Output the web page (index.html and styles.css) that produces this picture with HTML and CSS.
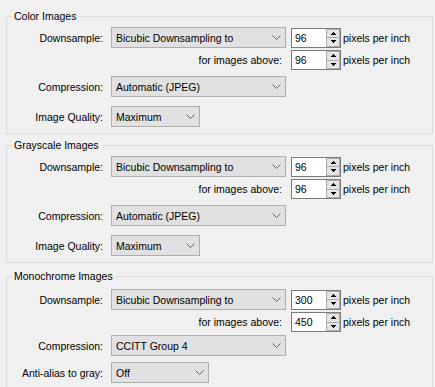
FILE: index.html
```html
<!DOCTYPE html>
<html lang="en">
<head>
    <meta charset="UTF-8">
    <title>Image compression settings</title>
    <link rel="stylesheet" href="styles.css">
</head>
<body>
    <div class="panel">
        <fieldset class="group g-color">
            <legend>Color Images</legend>
            <div class="row r1">
                <span class="lbl">Downsample:</span>
                <div class="combo wide"><span>Bicubic Downsampling to</span><svg class="chev" width="9" height="5"><polyline points="0.5,0.5 4.5,4.5 8.5,0.5"/></svg></div>
                <div class="spin"><span class="val">96</span><span class="btns"><span class="up"><svg width="5" height="3"><path d="M2 0h1v1h1v1h1v1H0V2h1V1h1z"/></svg></span><span class="down"><svg width="5" height="3"><path d="M0 0h5v1H4v1H3v1H2V2H1V1H0z"/></svg></span></span></div>
                <span class="unit">pixels per inch</span>
            </div>
            <div class="row r2">
                <span class="lbl long">for images above:</span>
                <div class="spin"><span class="val">96</span><span class="btns"><span class="up"><svg width="5" height="3"><path d="M2 0h1v1h1v1h1v1H0V2h1V1h1z"/></svg></span><span class="down"><svg width="5" height="3"><path d="M0 0h5v1H4v1H3v1H2V2H1V1H0z"/></svg></span></span></div>
                <span class="unit">pixels per inch</span>
            </div>
            <div class="row r3">
                <span class="lbl">Compression:</span>
                <div class="combo wide"><span>Automatic (JPEG)</span><svg class="chev" width="9" height="5"><polyline points="0.5,0.5 4.5,4.5 8.5,0.5"/></svg></div>
            </div>
            <div class="row r4">
                <span class="lbl">Image Quality:</span>
                <div class="combo short"><span>Maximum</span><svg class="chev" width="9" height="5"><polyline points="0.5,0.5 4.5,4.5 8.5,0.5"/></svg></div>
            </div>
        </fieldset>

        <fieldset class="group g-gray">
            <legend>Grayscale Images</legend>
            <div class="row r1">
                <span class="lbl">Downsample:</span>
                <div class="combo wide"><span>Bicubic Downsampling to</span><svg class="chev" width="9" height="5"><polyline points="0.5,0.5 4.5,4.5 8.5,0.5"/></svg></div>
                <div class="spin"><span class="val">96</span><span class="btns"><span class="up"><svg width="5" height="3"><path d="M2 0h1v1h1v1h1v1H0V2h1V1h1z"/></svg></span><span class="down"><svg width="5" height="3"><path d="M0 0h5v1H4v1H3v1H2V2H1V1H0z"/></svg></span></span></div>
                <span class="unit">pixels per inch</span>
            </div>
            <div class="row r2">
                <span class="lbl long">for images above:</span>
                <div class="spin"><span class="val">96</span><span class="btns"><span class="up"><svg width="5" height="3"><path d="M2 0h1v1h1v1h1v1H0V2h1V1h1z"/></svg></span><span class="down"><svg width="5" height="3"><path d="M0 0h5v1H4v1H3v1H2V2H1V1H0z"/></svg></span></span></div>
                <span class="unit">pixels per inch</span>
            </div>
            <div class="row r3">
                <span class="lbl">Compression:</span>
                <div class="combo wide"><span>Automatic (JPEG)</span><svg class="chev" width="9" height="5"><polyline points="0.5,0.5 4.5,4.5 8.5,0.5"/></svg></div>
            </div>
            <div class="row r4">
                <span class="lbl">Image Quality:</span>
                <div class="combo short"><span>Maximum</span><svg class="chev" width="9" height="5"><polyline points="0.5,0.5 4.5,4.5 8.5,0.5"/></svg></div>
            </div>
        </fieldset>

        <fieldset class="group g-mono">
            <legend>Monochrome Images</legend>
            <div class="row r1">
                <span class="lbl">Downsample:</span>
                <div class="combo wide"><span>Bicubic Downsampling to</span><svg class="chev" width="9" height="5"><polyline points="0.5,0.5 4.5,4.5 8.5,0.5"/></svg></div>
                <div class="spin"><span class="val">300</span><span class="btns"><span class="up"><svg width="5" height="3"><path d="M2 0h1v1h1v1h1v1H0V2h1V1h1z"/></svg></span><span class="down"><svg width="5" height="3"><path d="M0 0h5v1H4v1H3v1H2V2H1V1H0z"/></svg></span></span></div>
                <span class="unit">pixels per inch</span>
            </div>
            <div class="row r2">
                <span class="lbl long">for images above:</span>
                <div class="spin"><span class="val">450</span><span class="btns"><span class="up"><svg width="5" height="3"><path d="M2 0h1v1h1v1h1v1H0V2h1V1h1z"/></svg></span><span class="down"><svg width="5" height="3"><path d="M0 0h5v1H4v1H3v1H2V2H1V1H0z"/></svg></span></span></div>
                <span class="unit">pixels per inch</span>
            </div>
            <div class="row r3">
                <span class="lbl">Compression:</span>
                <div class="combo wide"><span>CCITT Group 4</span><svg class="chev" width="9" height="5"><polyline points="0.5,0.5 4.5,4.5 8.5,0.5"/></svg></div>
            </div>
            <div class="row r4">
                <span class="lbl">Anti-alias to gray:</span>
                <div class="combo mid"><span>Off</span><svg class="chev" width="9" height="5"><polyline points="0.5,0.5 4.5,4.5 8.5,0.5"/></svg></div>
            </div>
        </fieldset>
    </div>
</body>
</html>
```

FILE: styles.css
```css
body {
    margin: 0;
    background: #f0f0f0;
    font-family: "Liberation Sans", Arial, sans-serif;
    font-size: 10.5px;
    color: #000;
    overflow: hidden;
}

.panel {
    padding: 10px 2px 0 6px;
}

.group {
    margin: 0 0 5px;
    padding: 5px 0 6px;
    border: 1px solid #dcdcdc;
    min-width: 0;
}

.group legend {
    margin-left: 5px;
    padding: 0 2px;
    line-height: 12px;
}

.g-gray {
    margin-bottom: 7px;
}

.g-mono {
    padding-top: 7px;
}

.row {
    display: flex;
    align-items: center;
    height: 21px;
}

.row.r2 {
    margin-top: 2px;
    height: 20px;
}

.row.r3 {
    margin-top: 6px;
}

.row.r4 {
    margin-top: 9px;
}

.g-mono .row.r3 {
    margin-top: 3px;
}

.g-mono .row.r4 {
    margin-top: 6px;
}

.lbl {
    width: 96px;
    margin-right: 8px;
    text-align: right;
    white-space: nowrap;
}

.lbl.long {
    box-sizing: border-box;
    width: 279px;
    margin-right: 0;
    padding-right: 4px;
}

.combo {
    box-sizing: border-box;
    height: 21px;
    display: flex;
    align-items: center;
    justify-content: space-between;
    padding: 0 4px 0 4px;
    background: #e1e1e1;
    border: 1px solid #adadad;
    white-space: nowrap;
}

.combo.wide {
    width: 175px;
}

.combo.short {
    width: 89px;
}

.combo.mid {
    width: 98px;
}

.chev {
    fill: none;
    stroke: #606060;
    stroke-width: 1;
}

.spin {
    display: flex;
    height: 20px;
    margin-left: 5px;
}

.spin .val {
    box-sizing: border-box;
    width: 34px;
    height: 20px;
    padding: 3px 0 0 3px;
    background: #fff;
    border: 1px solid #7a7a7a;
    border-right: none;
}

.spin .btns {
    box-sizing: border-box;
    width: 16px;
    height: 20px;
    display: flex;
    flex-direction: column;
    background: #fff;
    border: 1px solid #7a7a7a;
    border-left: none;
    padding: 0 0 0 1px;
}

.spin .up,
.spin .down {
    flex: 1;
    display: flex;
    align-items: center;
    justify-content: center;
    background: #e5e5e5;
    border: 1px solid #adadad;
}

.spin .up {
    border-bottom: none;
}

.spin .down {
    border-top: 1px solid #adadad;
}

.spin svg {
    fill: #000;
    display: block;
}

.unit {
    margin-left: 2px;
    white-space: nowrap;
}
```
